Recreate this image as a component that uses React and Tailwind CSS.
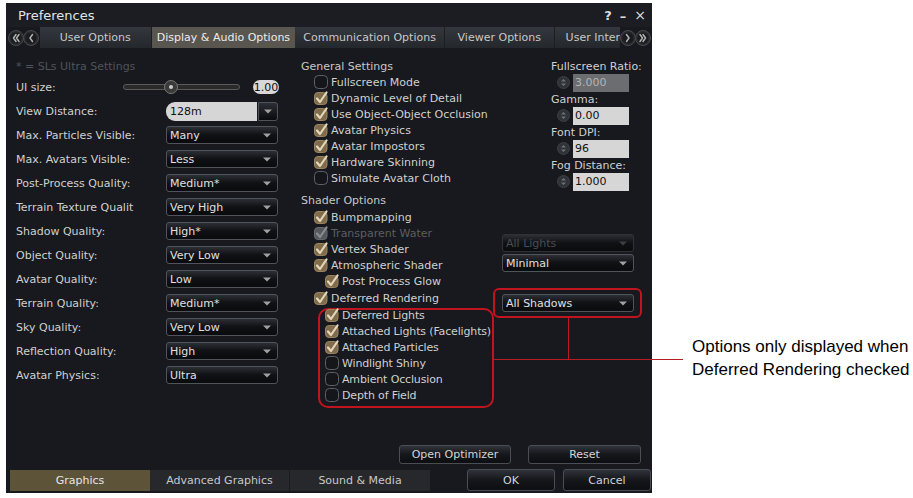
import React from 'react';

const LEFT_ROWS = [
  ['Max. Particles Visible:', 'Many'],
  ['Max. Avatars Visible:', 'Less'],
  ['Post-Process Quality:', 'Medium*'],
  ['Terrain Texture Qualit', 'Very High'],
  ['Shadow Quality:', 'High*'],
  ['Object Quality:', 'Very Low'],
  ['Avatar Quality:', 'Low'],
  ['Terrain Quality:', 'Medium*'],
  ['Sky Quality:', 'Very Low'],
  ['Reflection Quality:', 'High'],
  ['Avatar Physics:', 'Ultra'],
];

const GENERAL = [
  ['Fullscreen Mode', false],
  ['Dynamic Level of Detail', true],
  ['Use Object-Object Occlusion', true],
  ['Avatar Physics', true],
  ['Avatar Impostors', true],
  ['Hardware Skinning', true],
  ['Simulate Avatar Cloth', false],
];

const DEFERRED = [
  ['Deferred Lights', true],
  ['Attached Lights (Facelights)', true],
  ['Attached Particles', true],
  ['Windlight Shiny', false],
  ['Ambient Occlusion', false],
  ['Depth of Field', false],
];

const SPINNERS = [
  ['Fullscreen Ratio:', '3.000', true],
  ['Gamma:', '0.00'],
  ['Font DPI:', '96'],
  ['Fog Distance:', '1.000'],
];

function Check({ checked, disabled }) {
  if (!checked) {
    return (
      <svg width="14" height="14" viewBox="0 0 14 14" className="shrink-0">
        <rect x="0.5" y="0.5" width="13" height="13" rx="4" fill="#14161a" stroke="#5e6268" />
      </svg>
    );
  }
  return (
    <svg width="14" height="14" viewBox="0 0 14 14" className="shrink-0">
      <rect x="0.5" y="1.5" width="12.5" height="12" rx="3.5" fill={disabled ? '#55585c' : '#806c4b'} stroke={disabled ? '#66696d' : '#9a8560'} />
      <path d="M3 7.5 L6 11 L12.5 1.5" fill="none" stroke={disabled ? '#8a8d90' : '#e2d6bb'} strokeWidth="2.2" strokeLinecap="round" strokeLinejoin="round" />
    </svg>
  );
}

function CheckRow({ label, checked, disabled, indent }) {
  return (
    <div className={`flex items-center h-[16px] gap-[3px] ${indent ? 'pl-[24px]' : 'pl-[13px]'}`}>
      <Check checked={checked} disabled={disabled} />
      <span className={disabled ? 'text-[#5a5e64]' : 'text-[#d0d0d0]'}>{label}</span>
    </div>
  );
}

function Select({ value, disabled, className = '' }) {
  return (
    <div className={`flex items-center h-[18px] rounded-[3px] border ${disabled ? 'border-[#2e3136] text-[#4a4d52]' : 'border-[#50545a] text-[#e0e0e0]'} bg-linear-to-b from-[#2c2f35] via-[#101114] to-[#0a0b0d] pl-[3px] pr-[6px] ${className}`}>
      <span className="flex-1 truncate">{value}</span>
      <svg width="8" height="5" viewBox="0 0 8 5">
        <path d="M0 0.5h8L4 4.5z" fill={disabled ? '#3c3f44' : '#a0a0a0'} />
      </svg>
    </div>
  );
}

function Spinner() {
  return (
    <svg width="13" height="13" viewBox="0 0 13 13" className="shrink-0">
      <circle cx="6.5" cy="6.5" r="6" fill="#2f3237" stroke="#3d4046" />
      <path d="M4 5.5 L6.5 3 L9 5.5z M4 7.5 L6.5 10 L9 7.5z" fill="#6e7277" />
    </svg>
  );
}

function RoundArrow({ dir, double }) {
  const d = dir === 'left'
    ? (double ? 'M8 4.5 L5.5 8 L8 11.5 M11 4.5 L8.5 8 L11 11.5' : 'M9.5 4.5 L7 8 L9.5 11.5')
    : (double ? 'M5 4.5 L7.5 8 L5 11.5 M8 4.5 L10.5 8 L8 11.5' : 'M6.5 4.5 L9 8 L6.5 11.5');
  return (
    <svg width="16" height="16" viewBox="0 0 16 16" className="shrink-0 -mx-[0.5px]">
      <circle cx="8" cy="8" r="7.5" fill="#2a2b2e" stroke="#48494c" />
      <circle cx="8" cy="8" r="5.5" fill="#1a1b1e" />
      <path d={d} fill="none" stroke="#b0b0b0" strokeWidth="1.5" strokeLinecap="round" strokeLinejoin="round" />
    </svg>
  );
}

function Button({ children, className = '' }) {
  return (
    <div className={`flex items-center justify-center rounded-[3px] border border-[#4a4e54] bg-linear-to-b from-[#30333a] via-[#15171b] to-[#0d0e11] text-[#d4d4d4] ${className}`}>
      {children}
    </div>
  );
}

function Preferences() {
  return (
    <div className="ml-[6px] mt-[3px] w-[646px] h-[490px] bg-[#17191e] flex flex-col text-[11px] leading-none shrink-0" style={{ fontFamily: '"DejaVu Sans", sans-serif' }}>
      {/* title bar */}
      <div className="h-[24px] flex items-center pl-[12px] pr-[6px] bg-[#1b1d22]">
        <span className="text-[13px] text-[#e4e4e4] flex-1">Preferences</span>
        <div className="flex items-center gap-[8px] text-[#dcdcdc] font-bold text-[13px]">
          <span>?</span>
          <span className="mt-[3px]">–</span>
          <span className="font-normal text-[14px]">×</span>
        </div>
      </div>

      {/* tabs */}
      <div className="h-[21px] flex items-stretch bg-linear-to-b from-[#34373d] to-[#24272c] text-[#c8c8c8]">
        <div className="flex items-center pl-[2px] w-[34px] bg-[#17191e]">
          <RoundArrow dir="left" double />
          <RoundArrow dir="left" />
        </div>
        <div className="w-[112px] flex items-center justify-center border-r border-[#1c1e22]">User Options</div>
        <div className="w-[144px] flex items-center justify-center bg-[#59554f] text-[#ececec]">Display &amp; Audio Options</div>
        <div className="w-[150px] flex items-center justify-center border-r border-[#1c1e22]">Communication Options</div>
        <div className="w-[110px] flex items-center justify-center border-r border-[#1c1e22]">Viewer Options</div>
        <div className="flex-1 flex items-center pl-[11px] whitespace-nowrap">User Inter</div>
        <div className="flex items-center pr-[2px] bg-[#17191e]">
          <RoundArrow dir="right" />
          <RoundArrow dir="right" double />
        </div>
      </div>

      {/* content */}
      <div className="flex-1 flex">
        {/* left column */}
        <div className="w-[289px] pl-[10px] pt-[10px]">
          <div className="h-[17px] flex items-center text-[#4f535a]">* = SLs Ultra Settings</div>
          <div className="h-[24px] flex items-center text-[#d0d0d0]">
            <span className="w-[107px]">UI size:</span>
            <div className="relative w-[117px] h-[6px] rounded-full border border-[#5a5a5a] bg-[#2a2a2a]">
              <div className="absolute left-[40px] top-[-5px] w-[14px] h-[14px] rounded-full bg-[#3a3a3a] border border-[#777] flex items-center justify-center">
                <div className="w-[4px] h-[4px] rounded-full bg-[#ccc]" />
              </div>
            </div>
            <div className="ml-[13px] w-[26px] h-[14px] rounded-full bg-[#d8d8d8] text-[#111] flex items-center justify-center">1.00</div>
          </div>
          <div className="h-[24px] flex items-center text-[#d0d0d0]">
            <span className="w-[150px]">View Distance:</span>
            <div className="flex h-[19px] w-[112px]">
              <div className="flex-1 rounded-l-[9px] bg-[#d6d6d6] text-[#111] flex items-center pl-[4px]">128m</div>
              <div className="w-[20px] ml-[1px] rounded-r-[3px] border border-[#50545a] bg-linear-to-b from-[#2c2f35] to-[#0a0b0d] flex items-center justify-center">
                <svg width="8" height="5" viewBox="0 0 8 5"><path d="M0 0.5h8L4 4.5z" fill="#a0a0a0" /></svg>
              </div>
            </div>
          </div>
          {LEFT_ROWS.map(([label, value]) => (
            <div key={label} className="h-[24px] flex items-center text-[#d0d0d0]">
              <span className="w-[150px]">{label}</span>
              <Select value={value} className="w-[112px]" />
            </div>
          ))}
        </div>

        {/* middle column */}
        <div className="w-[200px] pl-[6px] pt-[10px]">
          <div className="h-[16px] flex items-center text-[#c8c8c8]">General Settings</div>
          {GENERAL.map(([l, c]) => <CheckRow key={l} label={l} checked={c} />)}
          <div className="h-[16px] mt-[6px] flex items-center text-[#c8c8c8]">Shader Options</div>
          <div className="mt-[1px]">
            <CheckRow label="Bumpmapping" checked />
            <CheckRow label="Transparent Water" checked disabled />
            <CheckRow label="Vertex Shader" checked />
            <CheckRow label="Atmospheric Shader" checked />
            <CheckRow label="Post Process Glow" checked indent />
            <div className="mt-[1px]"><CheckRow label="Deferred Rendering" checked /></div>
          </div>
          <div className="mt-[2px] ml-[17px] w-[176px] border-2 border-[#c0141e] rounded-[10px] pb-[3px]">
            <div className="-mt-[3px] pl-[5px]">
              {DEFERRED.map(([l, c]) => (
                <div key={l} className="flex items-center h-[16px] gap-[3px]">
                  <Check checked={c} />
                  <span className="text-[#d0d0d0] whitespace-nowrap tracking-[-0.15px]">{l}</span>
                </div>
              ))}
            </div>
          </div>
        </div>

        {/* right column */}
        <div className="flex-1 pt-[10px] pl-[7px]">
          <div className="pl-[49px]">
            {SPINNERS.map(([l, v, dis]) => (
              <div key={l}>
                <div className="h-[16px] flex items-center text-[#d0d0d0] whitespace-nowrap">{l}</div>
                <div className="h-[17px] flex items-center gap-[3px] pl-[6px]">
                  <Spinner />
                  <div className={`w-[56px] h-[18px] flex items-center pl-[2px] ${dis ? 'bg-[#6b6d70] text-[#b4b4b4]' : 'bg-[#d6d6d6] text-[#111]'}`}>{v}</div>
                </div>
              </div>
            ))}
          </div>
          <Select value="All Lights" disabled className="w-[132px] mt-[44px]" />
          <Select value="Minimal" className="w-[132px] mt-[2px]" />
          <div className="mt-[16px] -ml-[9px] w-[149px] border-2 border-[#c0141e] rounded-[6px] pl-[7px] py-[4px]">
            <Select value="All Shadows" className="w-[132px]" />
          </div>
        </div>
      </div>

      {/* footer buttons */}
      <div className="flex justify-end gap-[17px] pr-[11px]">
        <Button className="w-[112px] h-[19px]">Open Optimizer</Button>
        <Button className="w-[113px] h-[19px]">Reset</Button>
      </div>
      <div className="flex items-end mt-[5px] pb-[2px] pl-[4px] h-[24px]">
        <div className="flex h-[21px] text-[#c8c8c8]">
          <div className="w-[140px] flex items-center justify-center bg-[#5d5339] text-[#e6e6e6]">Graphics</div>
          <div className="w-[140px] flex items-center justify-center bg-[#26282c] border-r border-[#1a1b1e]">Advanced Graphics</div>
          <div className="w-[140px] flex items-center justify-center bg-[#26282c]">Sound &amp; Media</div>
        </div>
        <div className="flex-1" />
        <div className="flex gap-[8px] pr-[1px]">
          <Button className="w-[88px] h-[22px]">OK</Button>
          <Button className="w-[88px] h-[22px]">Cancel</Button>
        </div>
      </div>
    </div>
  );
}

export default function App() {
  return (
    <div className="relative w-[913px] h-[498px] bg-white overflow-hidden flex items-start">
      <Preferences />
      {/* annotation */}
      <div className="ml-[40px] mt-[335px] text-[17px] leading-[23px] text-black whitespace-nowrap" style={{ fontFamily: '"Liberation Sans", Arial, sans-serif' }}>
        <div>Options only displayed when</div>
        <div>Deferred Rendering checked</div>
      </div>
      {/* connector lines */}
      <div className="absolute left-[568px] top-[318px] w-[1px] h-[42px] bg-[#b81c24]" />
      <div className="absolute left-[494px] top-[359px] w-[189px] h-[1px] bg-[#b81c24]" />
    </div>
  );
}
